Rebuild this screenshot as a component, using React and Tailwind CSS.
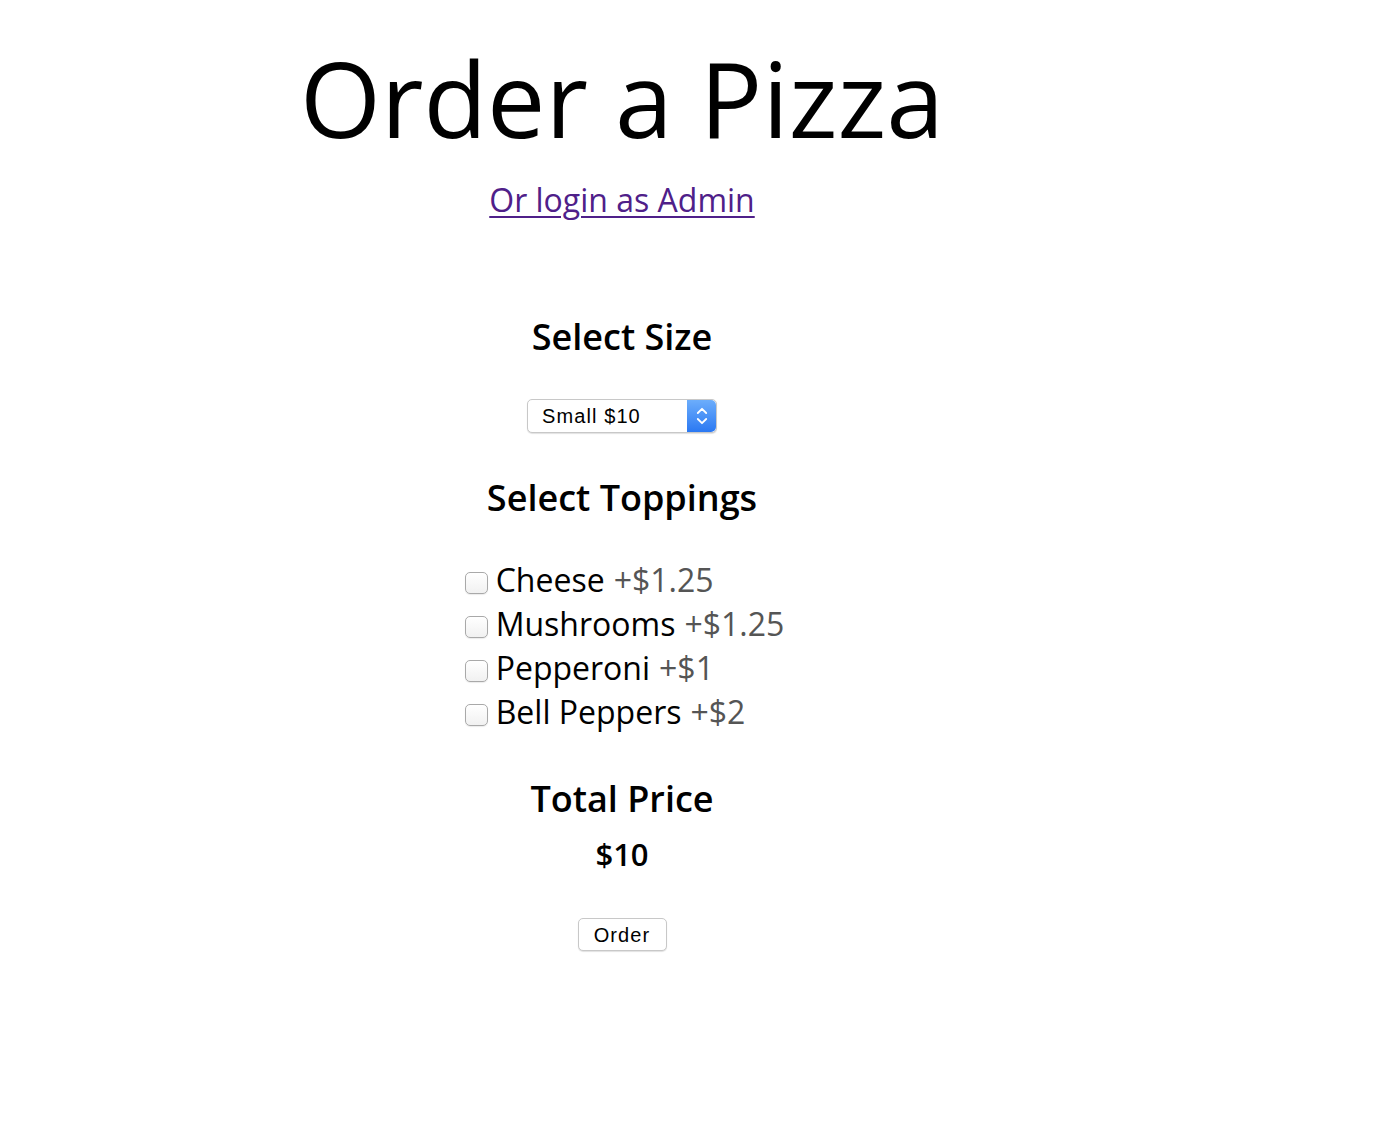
import { useState } from "react";

const TOPPINGS = [
  { name: "Cheese", price: "+$1.25" },
  { name: "Mushrooms", price: "+$1.25" },
  { name: "Pepperoni", price: "+$1" },
  { name: "Bell Peppers", price: "+$2" },
];

const SANS = "font-['Open_Sans',sans-serif]";
const UI = "font-['Liberation_Sans',Arial,sans-serif]";

function Stepper() {
  return (
    <div className="w-[29px] h-full rounded-r-[5px] bg-gradient-to-b from-[#6cadfb] to-[#2a78f2] flex items-center justify-center">
      <svg width="12" height="22" viewBox="0 0 12 22" fill="none" stroke="white" strokeWidth="1.8" strokeLinecap="round" strokeLinejoin="round">
        <path d="M1.8 8 L6 3.8 L10.2 8" />
        <path d="M1.8 14 L6 18.2 L10.2 14" />
      </svg>
    </div>
  );
}

function Topping({ name, price }) {
  const [checked, setChecked] = useState(false);
  return (
    <label className="flex items-start h-[44px] leading-[44px] cursor-pointer">
      <input
        type="checkbox"
        checked={checked}
        onChange={() => setChecked(!checked)}
        className="appearance-none w-[23px] h-[22px] mt-[14px] mr-[8px] rounded-[5px] border border-[#a9a9a9] bg-gradient-to-b from-white to-[#f1f1f1] shadow-[0_1px_1px_rgba(0,0,0,0.08)] checked:bg-[#2a78f2]"
      />
      <span className="text-[32px] text-black">{name}</span>
      <span className="text-[32px] text-[#555] ml-[9px]">{price}</span>
    </label>
  );
}

export default function App() {
  const [size, setSize] = useState("small");

  return (
    <div className={`w-[1244px] text-center text-black bg-white min-h-screen ${SANS}`}>
      <h1 className="pt-[46px] text-[104px] leading-none font-normal">Order a Pizza</h1>

      <div className="mt-[34px] text-[32px] leading-none">
        <a href="#" className="text-[#4f2089] underline underline-offset-[4px] decoration-[2px]">
          Or login as Admin
        </a>
      </div>

      <h2 className="mt-[103px] text-[36px] leading-none font-semibold">Select Size</h2>

      <div className="mt-[44px] flex justify-center">
        <div className="w-[190px] h-[34px] flex rounded-[5px] border border-[#c8c8c8] bg-white shadow-[0_1px_1px_rgba(0,0,0,0.12)]">
          <select
            value={size}
            onChange={(e) => setSize(e.target.value)}
            className={`appearance-none flex-1 bg-transparent pl-[14px] text-[20px] tracking-[1.1px] text-black outline-none ${UI}`}
          >
            <option value="small">Small $10</option>
            <option value="medium">Medium $12</option>
            <option value="large">Large $15</option>
          </select>
          <Stepper />
        </div>
      </div>

      <h2 className="mt-[47px] text-[36px] leading-none font-semibold">Select Toppings</h2>

      <div className="mt-[42px] ml-[5px] inline-flex flex-col items-start text-left">
        {TOPPINGS.map((t) => (
          <Topping key={t.name} name={t.name} price={t.price} />
        ))}
      </div>

      <h2 className="mt-[47px] text-[36px] leading-none font-semibold">Total Price</h2>
      <div className="mt-[22px] text-[31px] leading-none font-semibold">$10</div>

      <div className="mt-[48px] flex justify-center">
        <button
          className={`w-[89px] h-[33px] rounded-[5px] border border-[#c8c8c8] bg-white shadow-[0_1px_1px_rgba(0,0,0,0.12)] text-[20px] tracking-[1.1px] ${UI}`}
        >
          Order
        </button>
      </div>
    </div>
  );
}
